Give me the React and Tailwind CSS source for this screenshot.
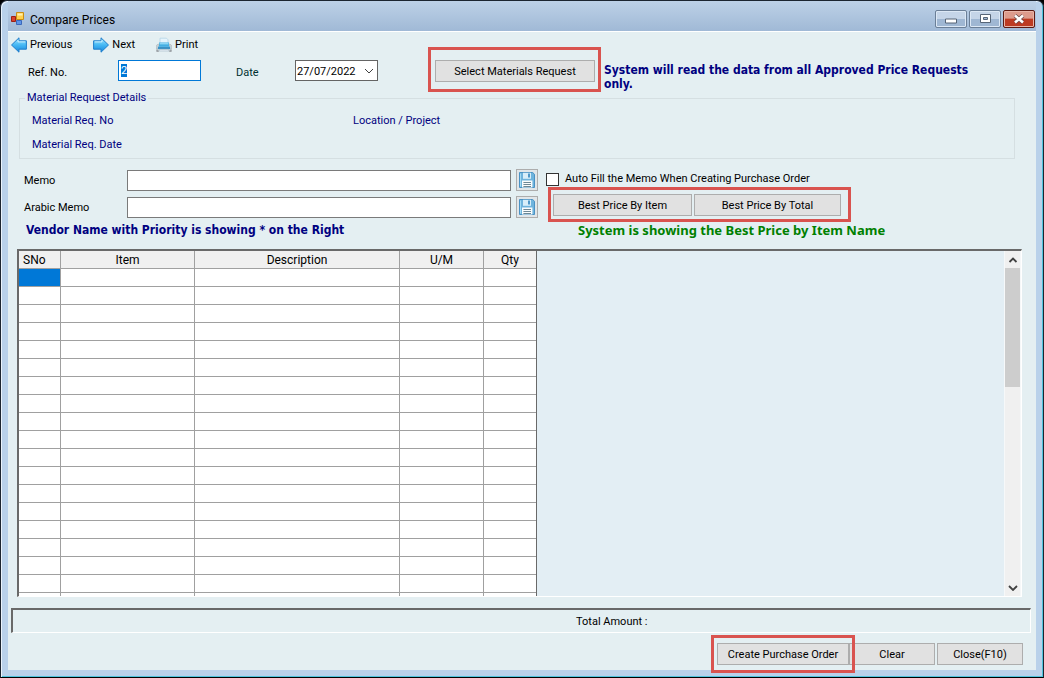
import { useEffect, useRef } from "react";

const columns = [
  { name: "SNo", width: "w-[42px]", align: "text-left pl-1", edge: "border-r" },
  { name: "Item", width: "w-[134px]", align: "text-center", edge: "border-r" },
  { name: "Description", width: "w-[205px]", align: "text-center", edge: "border-r" },
  { name: "U/M", width: "w-[84px]", align: "text-center", edge: "border-r" },
  { name: "Qty", width: "w-[52px]", align: "text-center", edge: "" },
];
const rows = Array.from({ length: 40 }, (_, i) => i);

function Button({ children, className = "" }) {
  return (
    <button type="button" className={`h-[22px] border border-[#adadad] bg-[#e1e1e1] pt-[2px] text-black ${className}`}>
      {children}
    </button>
  );
}

function Highlight({ className }) {
  return <span className={`pointer-events-none absolute z-10 border-[3px] border-[#d9534f] ${className}`} />;
}

function Arrow({ flip }) {
  return (
    <svg viewBox="0 0 16 16" className={flip ? "h-4 w-4 -scale-x-100" : "h-4 w-4"} aria-hidden="true">
      <defs>
        <linearGradient id={flip ? "arrowL" : "arrowR"} x1="0" y1="0" x2="0" y2="1">
          <stop offset="0" stopColor="#a5e6ff" />
          <stop offset="0.5" stopColor="#45b8f4" />
          <stop offset="1" stopColor="#1a86dc" />
        </linearGradient>
      </defs>
      <path d="M.6 3.8H8V.8L15.5 8 8 15.2V12.2H.6Z" fill={flip ? "url(#arrowL)" : "url(#arrowR)"} stroke="#1f7ecb" strokeWidth="1" strokeLinejoin="round" />
      <path d="M1.7 4.9H9V3" fill="none" stroke="#d2f3ff" strokeWidth=".9" />
    </svg>
  );
}

function Printer() {
  return (
    <svg viewBox="0 0 16 16" className="h-4 w-4" aria-hidden="true">
      <path d="M4 6.5V1.2h6.5l1.5 1.6v3.7Z" fill="#e6f4fc" stroke="#b4d3e6" strokeWidth=".8" />
      <path d="M.6 12V8.2L2.4 7v3h11.2V7l1.8 1.2V12Z" fill="#d4d8dc" stroke="#a3acb4" strokeWidth=".6" />
      <path d="M3 5.5h10V10H3Z" fill="#45aee2" />
      <path d="M3.6 6h8.8v1.4H3.6Z" fill="#8dd6f5" />
      <path d="M1.8 9.4h12.4v2.8H1.8Z" fill="#5eb9e6" />
      <path d="M2 11h12" stroke="#2476ae" strokeWidth="1.2" />
      <path d="M3.5 12.4h9l.6 1.6H2.9Z" fill="#eef5f9" stroke="#9fb4c2" strokeWidth=".6" />
      <path d="M1 12.4v1.8h1.8M15 12.4v1.8h-1.8" fill="none" stroke="#8a8f94" strokeWidth="1.2" />
    </svg>
  );
}

function SaveButton({ label }) {
  return (
    <button type="button" aria-label={label} className="flex h-[22px] w-[22px] shrink-0 items-center justify-center border border-[#adadad] bg-[#e1e6e9]">
      <svg viewBox="0 0 16 16" className="h-4 w-4" aria-hidden="true">
        <path d="M.5.5h13.2l1.8 1.8v13.2H.5Z" fill="#6fb4dd" stroke="#4a92c4" />
        <path d="M1.5 1.5v13" stroke="#a4dcf5" />
        <path d="M4 .8h8v6H4Z" fill="#d8eef9" />
        <path d="M9 1.5h2v4H9Z" fill="#4f97c8" />
        <path d="M3 8.5h10.4v7H3Z" fill="#fafcfd" />
        <path d="M4.4 10.5h7.6M4.4 12.5h7.6M4.4 14.5h7.6" stroke="#6d8795" />
      </svg>
    </button>
  );
}

function AppIcon() {
  return (
    <svg viewBox="0 0 14 14" className="h-[14px] w-[14px]" aria-hidden="true">
      <path d="M5.5.5h7v7h-7Z" fill="#ffd14d" stroke="#c98d12" />
      <path d="M6.5 1.5h5v2h-5Z" fill="#fff0b0" />
      <path d="M.5 4.5h4v5h-4Z" fill="#d8402b" stroke="#9c2015" />
      <path d="M5.5 8.5h5v4h-5Z" fill="#5d94e8" stroke="#3a68bb" />
    </svg>
  );
}

function TitleButtons() {
  const base =
    "flex h-[18px] w-8 items-center justify-center rounded-[2px] border border-[#6b7f97] bg-linear-to-b from-[#c5d5e8] from-50% to-[#9fb7d3] to-50% shadow-[inset_0_0_0_1px_#dce8f5]";
  return (
    <div className="flex gap-[2px]">
      <button type="button" aria-label="Minimize" className={base}>
        <svg viewBox="0 0 12 6" className="mt-1 h-[6px] w-3"><path d="M.5 1h11v4H.5Z" fill="#fff" stroke="#566577" /></svg>
      </button>
      <button type="button" aria-label="Maximize" className={base}>
        <svg viewBox="0 0 11 9" className="h-[9px] w-[11px]">
          <path d="M.5.5h10v8H.5Z" fill="#fff" stroke="#566577" />
          <path d="M3.5 3.5h4v2h-4Z" fill="#9fb7d3" stroke="#566577" />
        </svg>
      </button>
      <button type="button" aria-label="Close window" className="flex h-[18px] w-8 items-center justify-center rounded-[2px] border border-[#5c1a12] bg-linear-to-b from-[#dd9b8c] from-45% to-[#bd3b22] to-50% shadow-[inset_0_0_0_1px_#e8b5a8]">
        <svg viewBox="0 0 12 10" className="h-[10px] w-3">
          <path d="M2 1.5l8 7M10 1.5l-8 7" stroke="#6c4a4a" strokeWidth="4" />
          <path d="M2 1.5l8 7M10 1.5l-8 7" stroke="#fff" strokeWidth="2.6" />
        </svg>
      </button>
    </div>
  );
}

function Chevron({ up, thin }) {
  return (
    <svg viewBox="0 0 10 6" className="h-[6px] w-[10px]" aria-hidden="true">
      <path d={up ? "M1.5 5L5 1.5 8.5 5" : "M1 1L5 5 9 1"} fill="none" stroke="#404040" strokeWidth={thin ? 1 : 1.8} />
    </svg>
  );
}

export default function App() {
  const refNo = useRef(null);
  useEffect(() => {
    refNo.current.focus();
    refNo.current.select();
  }, []);

  return (
    <div className="h-screen min-h-[560px] bg-black font-['Tahoma','Roboto',sans-serif] text-[11px] leading-[14px] text-black">
      <div className="flex h-full flex-col rounded-t-[7px] border border-[#1c2530] border-b-black bg-[#b9d1ea] px-[7px] pb-[7px] shadow-[inset_1px_1px_0_#eaf3fc,inset_-1px_-1px_0_#4fc3dc]">
        <header className="flex h-[30px] shrink-0 items-center gap-[5px] bg-linear-to-b from-[#bdd1e7] to-[#a0b9d6] pt-[5px] pr-[1px] pl-[3px]">
          <AppIcon />
          <h1 className="flex-1 pt-[2px] font-['Segoe_UI','Roboto',sans-serif] text-[12px] leading-4">Compare Prices</h1>
          <TitleButtons />
        </header>

        <main className="flex min-h-0 flex-1 flex-col border-t border-white bg-[#e4eff2]">
          <nav className="flex h-6 shrink-0 items-center gap-[21px] pt-[2px] pl-[3px]">
            <button type="button" className="flex items-center gap-[3px]"><Arrow flip />Previous</button>
            <button type="button" className="flex items-center gap-[3px]"><Arrow />Next</button>
            <button type="button" className="flex items-center gap-[3px]"><Printer />Print</button>
          </nav>

          <div className="flex h-[35px] shrink-0 items-start pt-1 pl-5">
            <label htmlFor="ref" className="w-[90px] pt-[6px]">Ref. No.</label>
            <input id="ref" ref={refNo} defaultValue="2" className="h-[21px] w-[83px] border border-[#0078d7] bg-white px-[2px] outline-none selection:bg-[#0078d7] selection:text-white" />
            <label htmlFor="date" className="ml-[35px] w-[59px] pt-[6px] text-[#003030]">Date</label>
            <div className="flex h-[21px] w-[83px] items-center border border-[#646464] bg-white">
              <input id="date" defaultValue="27/07/2022" className="h-full w-[64px] pt-[2px] pl-[1px] text-[11px] outline-none" />
              <button type="button" aria-label="Open calendar" className="flex h-full flex-1 items-center justify-center"><Chevron thin /></button>
            </div>
            <div className="relative ml-[57px]">
              <Button className="w-[160px]">Select Materials Request</Button>
              <Highlight className="-top-[13px] -right-[6px] -bottom-[10px] -left-[7px]" />
            </div>
            <p className="ml-[9px] max-w-[384px] flex-1 pt-[3px] font-['DejaVu_Sans_Condensed','DejaVu_Sans',sans-serif] text-[12px] font-bold text-[#000080]">
              System will read the data from all Approved Price Requests only.
            </p>
          </div>

          <fieldset className="mr-[21px] ml-[11px] shrink-0 border border-[#d5dfe2] pt-1 pb-[1px] pl-3 text-[#000080]">
            <legend className="-ml-[7px] px-[2px]">Material Request Details</legend>
            <div className="flex h-6 items-center">
              <span className="w-[321px]">Material Req. No</span>
              <span>Location / Project</span>
            </div>
            <div className="flex h-6 items-center">Material Req. Date</div>
          </fieldset>

          <div className="mt-[10px] flex shrink-0 pl-4">
            <div className="flex flex-col gap-[5px]">
              <div className="flex items-center">
                <label htmlFor="memo" className="w-[103px] pt-[2px]">Memo</label>
                <input id="memo" className="h-[21px] w-[384px] border border-[#7a7a7a] bg-white px-1 outline-none" />
                <span className="ml-[5px]"><SaveButton label="Save memo" /></span>
              </div>
              <div className="flex items-center">
                <label htmlFor="arabic" className="w-[103px] pt-[2px]">Arabic Memo</label>
                <input id="arabic" className="h-[21px] w-[384px] border border-[#7a7a7a] bg-white px-1 outline-none" />
                <span className="ml-[5px]"><SaveButton label="Save Arabic memo" /></span>
              </div>
            </div>
            <div className="ml-2">
              <label className="flex h-5 items-center gap-[6px]">
                <input type="checkbox" className="h-[13px] w-[13px] appearance-none border border-[#333] bg-white checked:bg-[#0078d7]" />
                Auto Fill the Memo When Creating Purchase Order
              </label>
              <div className="relative mt-[5px] ml-[7px] flex gap-[2px]">
                <Button className="w-[139px]">Best Price By Item</Button>
                <Button className="w-[147px]">Best Price By Total</Button>
                <Highlight className="-top-[7px] -right-[10px] -bottom-[6px] -left-[5px]" />
              </div>
            </div>
          </div>

          <div className="flex h-[23px] shrink-0 items-center pl-[18px] font-bold">
            <p className="w-[552px] font-['DejaVu_Sans_Condensed','DejaVu_Sans',sans-serif] text-[12px] text-[#000080]">Vendor Name with Priority is showing * on the Right</p>
            <p className="font-['Noto_Sans',sans-serif] text-[13px] text-[#008000]">System is showing the Best Price by Item Name</p>
          </div>

          <section className="mt-2 mr-[14px] ml-[9px] flex min-h-0 flex-1 overflow-hidden border-t-2 border-r border-b border-l-2 border-t-[#696969] border-r-white border-b-white border-l-[#696969] bg-[#e3eef4]">
            <div className="h-full shrink-0 overflow-hidden border-r border-[#696969]">
              <table className="w-[517px] table-fixed border-separate border-spacing-0 bg-white">
                <thead>
                  <tr className="h-[18px]">
                    {columns.map((c) => (
                      <th key={c.name} className={`border-b border-[#a0a0a0] bg-[#f0f0f0] p-0 pt-[2px] text-[12px] leading-[15px] font-normal ${c.edge} ${c.width} ${c.align}`}>{c.name}</th>
                    ))}
                  </tr>
                </thead>
                <tbody>
                  {rows.map((r) => (
                    <tr key={r} className="h-[18px]">
                      {columns.map((c, i) => (
                        <td key={c.name} className={`border-b border-[#a0a0a0] p-0 ${c.edge} ${r === 0 && i === 0 ? "bg-[#0078d7]" : ""}`} />
                      ))}
                    </tr>
                  ))}
                </tbody>
              </table>
            </div>
            <div className="flex-1" />
            <div className="flex w-[17px] flex-col border-x border-[#f6f8f9] bg-[#f0f0f0]">
              <button type="button" aria-label="Scroll up" className="flex h-[17px] items-center justify-center"><Chevron up /></button>
              <div className="h-[119px] bg-[#cdcdcd]" />
              <div className="flex-1" />
              <button type="button" aria-label="Scroll down" className="flex h-[17px] items-center justify-center"><Chevron /></button>
            </div>
          </section>

          <div className="mt-[11px] mr-[5px] ml-[3px] flex h-[25px] shrink-0 items-center border-t-2 border-r border-b border-l-2 border-t-[#696969] border-r-white border-b-white border-l-[#696969] pt-[2px] pl-[563px]">
            Total Amount :
          </div>

          <footer className="mt-[10px] mr-[13px] mb-[5px] flex shrink-0 justify-end">
            <div className="relative">
              <Button className="w-[132px]">Create Purchase Order</Button>
              <Highlight className="-top-[8px] -right-[6px] -bottom-[8px] -left-[6px]" />
            </div>
            <Button className="w-[86px]">Clear</Button>
            <Button className="ml-[2px] w-[86px]">Close(F10)</Button>
          </footer>
        </main>
      </div>
    </div>
  );
}
